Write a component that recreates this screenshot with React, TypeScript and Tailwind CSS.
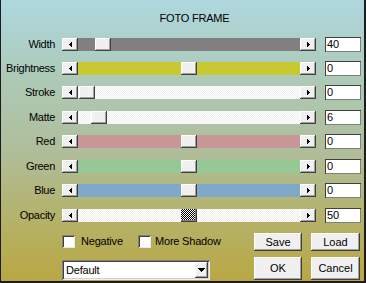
import React from "react";

const light =
  "bg-[#f8f8f8] bg-[image:repeating-conic-gradient(#ffffff_0_25%,#efefef_0_50%)] bg-[length:2px_2px]";
const raised =
  "bg-[#f0f0f0] shadow-[inset_-1px_-1px_#404040,inset_1px_1px_#ffffff,inset_-2px_-2px_#a0a0a0]";

type Row = {
  label: string;
  track: string;
  thumb: number;
  value: string;
  mt?: boolean;
  checker?: boolean;
};

const rows: Row[] = [
  { label: "Width", track: "bg-[#808080]", thumb: 17, value: "40" },
  { label: "Brightness", track: "bg-[#c8c832]", thumb: 103, value: "0" },
  { label: "Stroke", track: light, thumb: 1, value: "0" },
  { label: "Matte", track: light, thumb: 13, value: "6", mt: true },
  { label: "Red", track: "bg-[#c89696]", thumb: 103, value: "0" },
  { label: "Green", track: "bg-[#96c896]", thumb: 103, value: "0", mt: true },
  { label: "Blue", track: "bg-[#80a8c8]", thumb: 103, value: "0" },
  { label: "Opacity", track: light, thumb: 103, value: "50", mt: true, checker: true },
];

function LeftArrow() {
  return (
    <svg width="3" height="5" shapeRendering="crispEdges">
      <rect x="2" y="0" width="1" height="5" fill="#000" />
      <rect x="1" y="1" width="1" height="3" fill="#000" />
      <rect x="0" y="2" width="1" height="1" fill="#000" />
    </svg>
  );
}
function RightArrow() {
  return (
    <svg width="3" height="5" shapeRendering="crispEdges">
      <rect x="0" y="0" width="1" height="5" fill="#000" />
      <rect x="1" y="1" width="1" height="3" fill="#000" />
      <rect x="2" y="2" width="1" height="1" fill="#000" />
    </svg>
  );
}
function DownArrow() {
  return (
    <svg width="7" height="4" shapeRendering="crispEdges">
      <rect x="0" y="0" width="7" height="1" fill="#000" />
      <rect x="1" y="1" width="5" height="1" fill="#000" />
      <rect x="2" y="2" width="3" height="1" fill="#000" />
      <rect x="3" y="3" width="1" height="1" fill="#000" />
    </svg>
  );
}

function Scroll({ r }: { r: Row }) {
  return (
    <div className="ml-[7px] mt-[1px] flex h-[13px] w-[254px]">
      <div className={`flex h-[13px] w-[16px] items-center justify-center ${raised}`}>
        <LeftArrow />
      </div>
      <div className={`relative h-[13px] flex-1 ${r.track}`}>
        <div
          className={
            r.checker
              ? "absolute top-0 h-[13px] w-[16px] bg-[#808080] bg-[image:repeating-conic-gradient(#000000_0_25%,#ffffff_0_50%)] bg-[length:2px_2px] shadow-[inset_-1px_-1px_#404040,inset_-2px_-2px_#808080]"
              : `absolute top-0 h-[13px] w-[16px] ${raised}`
          }
          style={{ left: r.thumb }}
        />
      </div>
      <div className={`flex h-[13px] w-[16px] items-center justify-center pl-[1px] ${raised}`}>
        <RightArrow />
      </div>
    </div>
  );
}

function Checkbox() {
  return (
    <div className="h-[13px] w-[13px] bg-white shadow-[inset_1px_1px_#808080,inset_-1px_-1px_#e8e8e8,inset_2px_2px_#404040]" />
  );
}

export default function App() {
  return (
    <div className="flex h-[283px] w-[366px] flex-col border-b-2 border-l border-r-2 border-[#1c1c1c] bg-[image:linear-gradient(180deg,#aed7df_0%,#adc9b4_30%,#afbd98_55%,#b5b166_80%,#b9a743_100%)] font-['Liberation_Sans',Arial,sans-serif] text-[11px] leading-[13px] text-black">
      <div className="mt-[12px] h-[13px] pl-[24px] text-center tracking-[-0.2px]">FOTO FRAME</div>
      <div className="mt-[12px] flex flex-col">
        {rows.map((r) => (
          <div key={r.label} className={`flex h-[24px] items-start ${r.mt ? "mt-[1px]" : ""}`}>
            <div className="mt-[1px] h-[13px] w-[54px] text-right tracking-[-0.3px]">{r.label}</div>
            <Scroll r={r} />
            <div className="ml-[9px] h-[15px] w-[36px] bg-white pl-[2px] pt-[1px] shadow-[inset_1px_1px_#404040,inset_-1px_-1px_#808080]">
              {r.value}
            </div>
          </div>
        ))}
      </div>
      <div className="mt-[1px] flex h-[18px] items-start pl-[61px]">
        <div className="mt-[2px] flex w-[76px] items-center">
          <Checkbox />
          <span className="ml-[6px] tracking-[-0.2px]">Negative</span>
        </div>
        <div className="mt-[2px] flex w-[116px] items-center">
          <Checkbox />
          <span className="ml-[4px] tracking-[-0.2px]">More Shadow</span>
        </div>
        <div className={`flex h-[18px] w-[48px] items-center justify-center ${raised}`}>Save</div>
        <div className={`ml-[9px] flex h-[18px] w-[49px] items-center justify-center ${raised}`}>Load</div>
      </div>
      <div className="mt-[6px] flex h-[23px] items-start pl-[61px]">
        <div className="mt-[3px] flex h-[20px] w-[148px] items-center bg-white shadow-[inset_1px_1px_#808080,inset_-1px_-1px_#f0f0f0,inset_2px_2px_#404040,inset_-2px_-2px_#d4d0c8]">
          <span className="flex-1 pl-[4px] tracking-[-0.2px]">Default</span>
          <div className={`mr-[2px] flex h-[16px] w-[13px] items-center justify-center ${raised}`}>
            <DownArrow />
          </div>
        </div>
        <div className={`ml-[44px] flex h-[23px] w-[48px] items-center justify-center ${raised}`}>OK</div>
        <div className={`ml-[9px] flex h-[23px] w-[49px] items-center justify-center ${raised}`}>Cancel</div>
      </div>
    </div>
  );
}
